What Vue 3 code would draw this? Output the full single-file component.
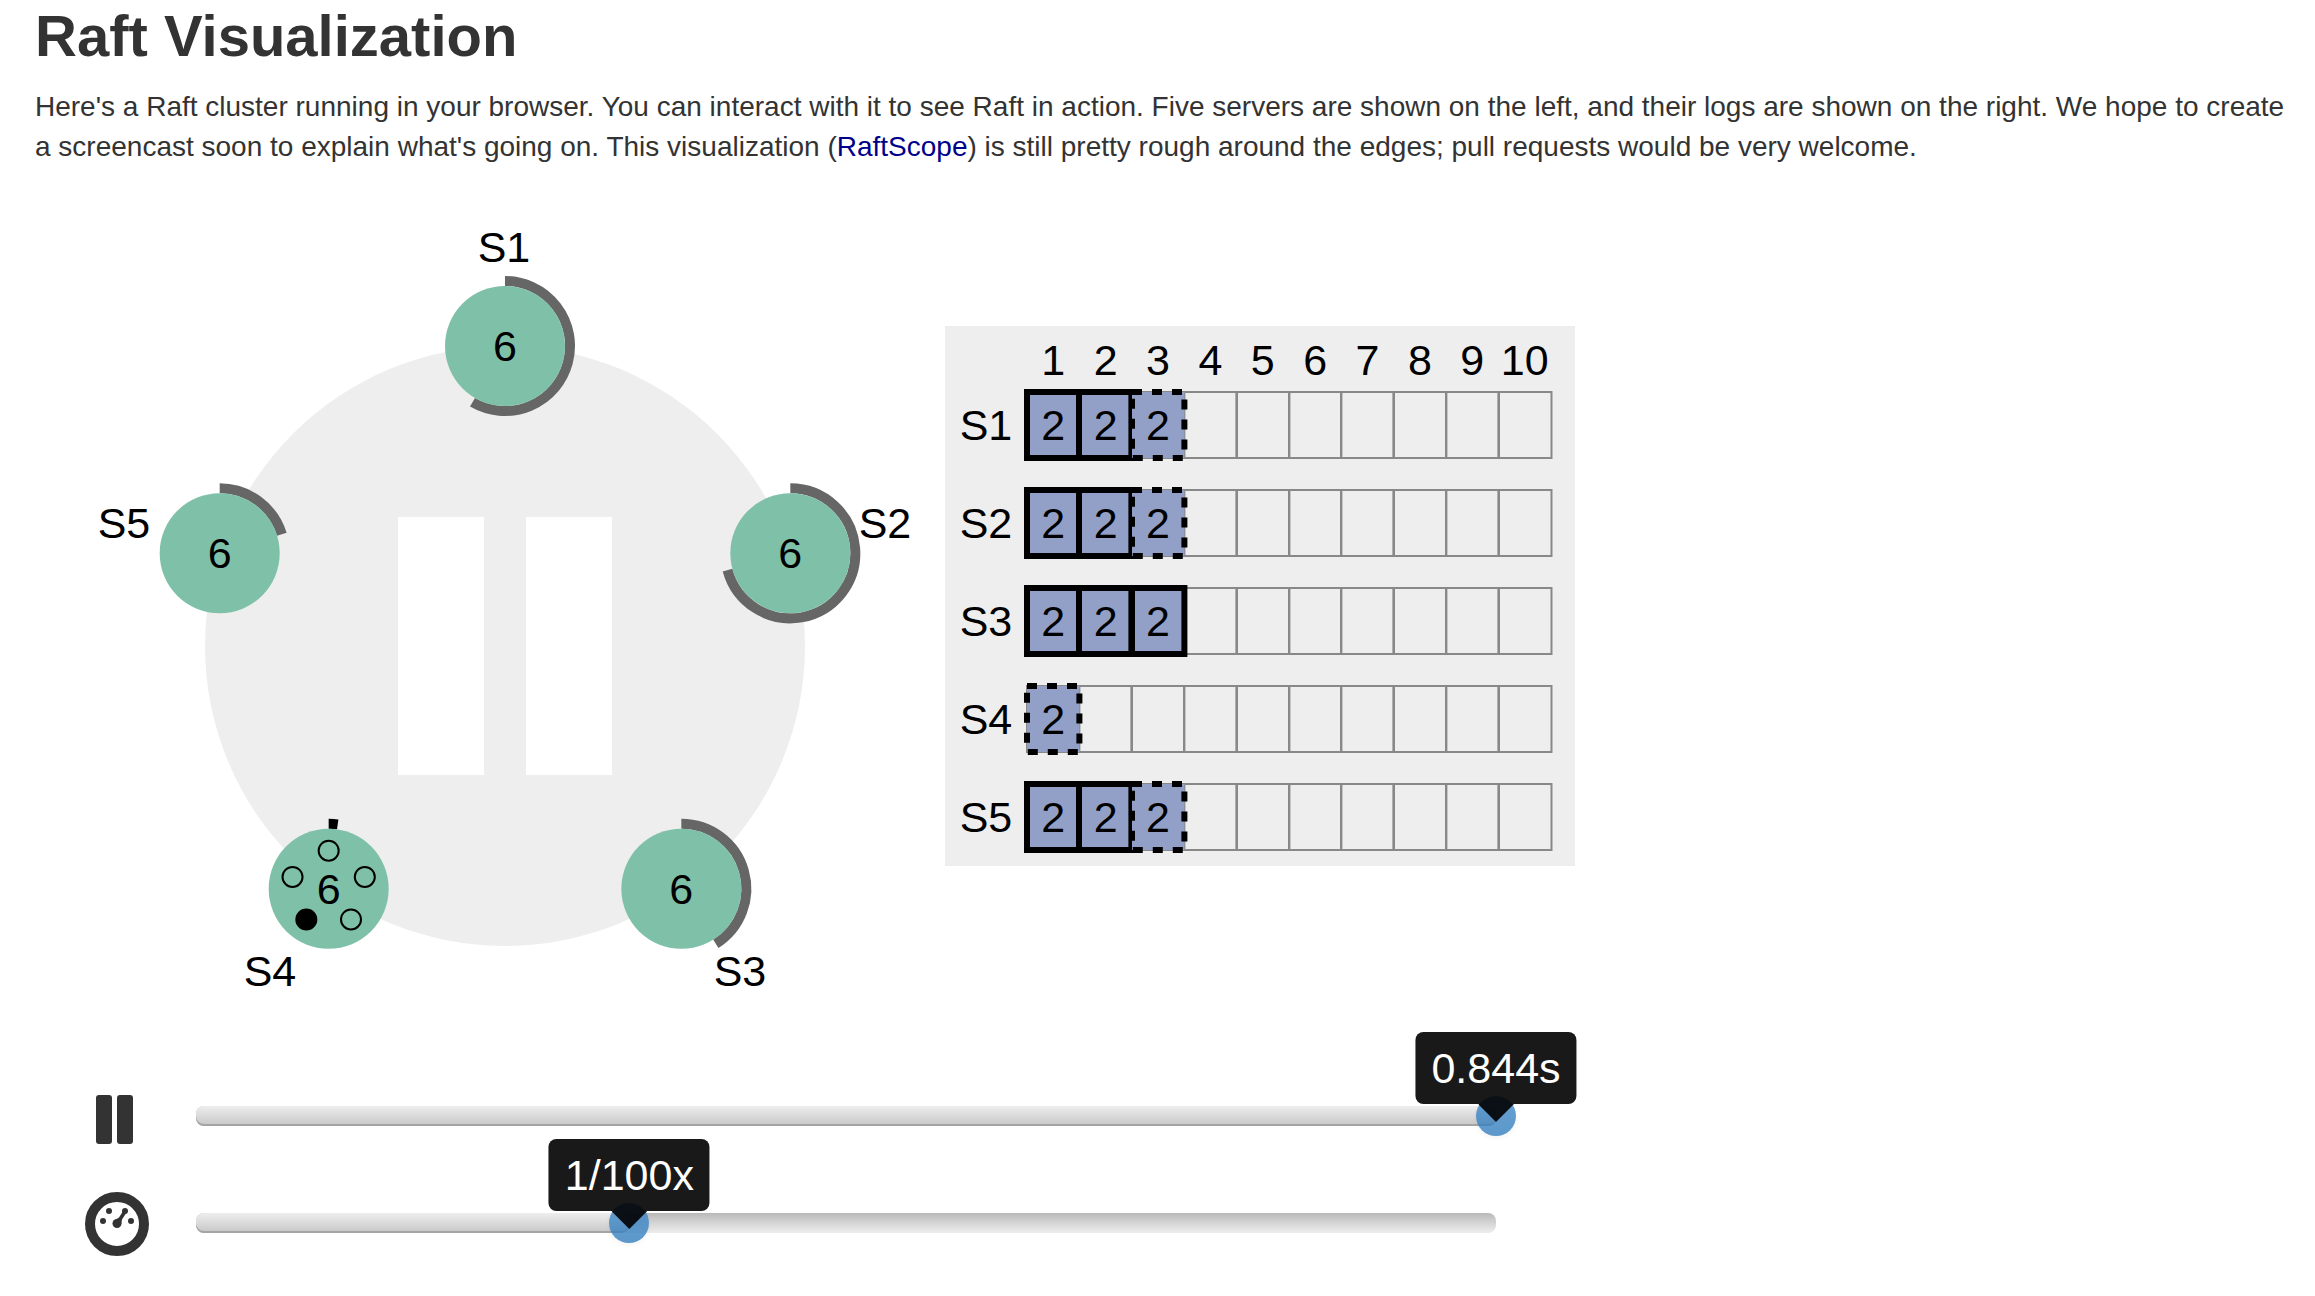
<script setup>
import { ref, computed } from 'vue'

const center = { x: 470, y: 440 }
const ringRadius = 300

function around(cx, cy, radius, degrees) {
  const a = (degrees * Math.PI) / 180
  return { x: cx + radius * Math.sin(a), y: cy - radius * Math.cos(a) }
}

function arcPath(s) {
  const from = around(s.x, s.y, 65, 0)
  const to = around(s.x, s.y, 65, s.timer)
  const large = s.timer > 180 ? 1 : 0
  return `M${from.x} ${from.y} A65 65 0 ${large} 1 ${to.x} ${to.y}`
}

const servers = [
  { name: 'S1', term: 6, timer: 210, label: { x: 469, y: 56 } },
  { name: 'S2', term: 6, timer: 255, label: { x: 850, y: 332 } },
  { name: 'S3', term: 6, timer: 148, label: { x: 705, y: 780 } },
  { name: 'S4', term: 6, timer: 8, candidate: true, label: { x: 235, y: 780 } },
  { name: 'S5', term: 6, timer: 73, label: { x: 89, y: 332 } },
].map((s, i) => ({ ...s, ...around(center.x, center.y, ringRadius, i * 72) }))

const candidate = servers.find((s) => s.candidate)
const votes = servers.map((s, i) => ({
  ...around(candidate.x, candidate.y, 38, i * 72),
  granted: s === candidate,
}))

const indexes = Array.from({ length: 10 }, (_, i) => i + 1)
const entry = (term, committed) => ({ term, committed })
const logs = [
  { name: 'S1', entries: [entry(2, true), entry(2, true), entry(2, false)] },
  { name: 'S2', entries: [entry(2, true), entry(2, true), entry(2, false)] },
  { name: 'S3', entries: [entry(2, true), entry(2, true), entry(2, true)] },
  { name: 'S4', entries: [entry(2, false)] },
  { name: 'S5', entries: [entry(2, true), entry(2, true), entry(2, false)] },
]

const time = ref(844)
const speed = ref(1000)
const timeLabel = computed(() => `${(time.value / 1000).toFixed(3)}s`)
const speedLabel = computed(() => `1/${Math.round(10 ** (speed.value / 500))}x`)
const timePercent = computed(() => `${(time.value / 844) * 100}%`)
const speedPercent = computed(() => `${(speed.value / 3000) * 100}%`)
</script>

<template>
  <main class="page">
    <h1>Raft Visualization</h1>
    <p class="intro">
      Here's a Raft cluster running in your browser. You can interact with it to see Raft in action.
      Five servers are shown on the left, and their logs are shown on the right. We hope to create a
      screencast soon to explain what's going on. This visualization (<a href="#raftscope">RaftScope</a>)
      is still pretty rough around the edges; pull requests would be very welcome.
    </p>

    <section class="stage">
      <svg class="cluster" viewBox="0 0 910 800" role="img" aria-label="Raft cluster, paused">
        <circle class="ring" :cx="center.x" :cy="center.y" :r="ringRadius" />
        <rect class="bar" x="363" y="311" width="86" height="258" />
        <rect class="bar" x="491" y="311" width="86" height="258" />
        <g v-for="s in servers" :key="s.name">
          <path class="timer" :class="{ active: s.candidate }" :d="arcPath(s)" />
          <circle class="server" :cx="s.x" :cy="s.y" r="60" />
          <text :x="s.x" :y="s.y + 15">{{ s.term }}</text>
          <text :x="s.label.x" :y="s.label.y">{{ s.name }}</text>
        </g>
        <circle
          v-for="(v, i) in votes"
          :key="i"
          class="vote"
          :class="{ granted: v.granted }"
          :cx="v.x"
          :cy="v.y"
          r="10"
        />
      </svg>

      <div class="logs">
        <table>
          <thead>
            <tr>
              <td class="corner"></td>
              <th v-for="i in indexes" :key="i" scope="col">{{ i }}</th>
            </tr>
          </thead>
          <tbody>
            <tr v-for="log in logs" :key="log.name">
              <th scope="row">{{ log.name }}</th>
              <td v-for="(i, n) in indexes" :key="i">
                <div class="slot">
                  <svg class="grid" aria-hidden="true"><rect width="100%" height="100%" /></svg>
                  <template v-if="log.entries[n]">
                    <svg
                      class="entry"
                      :class="{ pending: !log.entries[n].committed }"
                      aria-hidden="true"
                    >
                      <rect width="100%" height="100%" />
                    </svg>
                    <span class="term">{{ log.entries[n].term }}</span>
                  </template>
                </div>
              </td>
            </tr>
          </tbody>
        </table>
      </div>
    </section>

    <section class="controls">
      <div class="control">
        <button type="button" class="icon" aria-label="Pause">
          <svg viewBox="0 0 64 64">
            <rect x="11" y="11" width="16" height="49" rx="3" />
            <rect x="32" y="11" width="16" height="49" rx="3" />
          </svg>
        </button>
        <div class="slider">
          <div class="track"></div>
          <div class="fill" :style="{ width: timePercent }"></div>
          <input v-model.number="time" type="range" min="0" max="844" aria-label="Time" />
          <output class="tip" :style="{ left: timePercent }">{{ timeLabel }}</output>
        </div>
      </div>
      <div class="control">
        <button type="button" class="icon" aria-label="Speed">
          <svg viewBox="0 0 64 64">
            <circle class="dial" cx="32" cy="33" r="27" />
            <circle cx="18" cy="30" r="3" />
            <circle cx="24" cy="20" r="3" />
            <circle cx="40" cy="20" r="3" />
            <circle cx="46" cy="30" r="3" />
            <circle cx="32" cy="32.5" r="4.5" />
            <path d="M30 29 L34 26.5 L38.5 19.5 L41.5 21.5 L37 28.5 L36 34 Z" />
          </svg>
        </button>
        <div class="slider">
          <div class="track"></div>
          <div class="fill" :style="{ width: speedPercent }"></div>
          <input v-model.number="speed" type="range" min="0" max="3000" aria-label="Playback speed" />
          <output class="tip" :style="{ left: speedPercent }">{{ speedLabel }}</output>
        </div>
      </div>
    </section>
  </main>
</template>

<style>
body {
  background: #fff;
}
</style>

<style scoped>
.page {
  padding: 0 8px 0 35px;
  color: #333;
  font-family: "Liberation Sans", Arial, sans-serif;
  font-size: 28px;
  line-height: 40px;
}

h1 {
  margin: 0 0 15px;
  font-size: 58px;
  line-height: 72px;
  font-weight: 700;
}

.intro {
  margin: 0;
}

.intro a {
  color: #00008b;
  text-decoration: none;
}

.stage {
  display: grid;
  grid-template-columns: 13fr 9fr;
  align-items: start;
  max-width: 1540px;
  margin-top: 39px;
}

.cluster {
  display: block;
  width: 100%;
}

.ring {
  fill: #eee;
}

.bar {
  fill: #fff;
}

.server {
  fill: #7fc0a9;
}

.timer {
  fill: none;
  stroke: #666;
  stroke-width: 10;
}

.timer.active {
  stroke: #000;
}

.vote {
  fill: none;
  stroke: #000;
  stroke-width: 2;
}

.vote.granted {
  fill: #000;
}

.cluster text {
  fill: #000;
  font-size: 43px;
  text-anchor: middle;
}

.logs {
  margin-top: 120px;
  padding-right: 24px;
  background: #eee;
}

table {
  width: 100%;
  table-layout: fixed;
  border-collapse: collapse;
  color: #000;
  font-size: 43px;
  line-height: 44px;
}

th,
td {
  padding: 0;
  font-weight: 400;
  text-align: center;
}

.corner {
  width: 82px;
}

thead th {
  height: 56px;
  padding-bottom: 10px;
  vertical-align: bottom;
  white-space: nowrap;
}

tbody th,
tbody td {
  height: 66px;
  padding-bottom: 32px;
}

tbody tr:last-child th,
tbody tr:last-child td {
  padding-bottom: 16px;
}

.slot {
  position: relative;
  height: 66px;
}

.grid,
.entry {
  position: absolute;
  inset: 0;
  width: 100%;
  height: 100%;
  overflow: visible;
}

.grid rect {
  fill: none;
  stroke: #888;
  stroke-width: 2;
}

.entry {
  z-index: 1;
}

.entry rect {
  fill: #92a0c8;
  stroke: #000;
  stroke-width: 6;
}

.entry.pending rect {
  stroke-dasharray: 10 10;
}

.term {
  position: relative;
  z-index: 2;
  line-height: 66px;
}

.controls {
  display: grid;
  gap: 27px;
  max-width: 1461px;
  margin-top: 70px;
}

.control {
  display: flex;
  align-items: center;
  gap: 47px;
  height: 80px;
  padding-left: 50px;
}

.icon {
  flex: none;
  width: 64px;
  height: 64px;
  padding: 0;
  border: 0;
  background: none;
}

.icon svg {
  display: block;
  overflow: visible;
  fill: #333;
}

.icon .dial {
  fill: none;
  stroke: #333;
  stroke-width: 10;
}

.slider {
  position: relative;
  flex: 1;
  height: 20px;
}

.track,
.fill {
  position: absolute;
  inset: 0 auto 0 0;
  width: 100%;
  border-radius: 8px;
}

.track {
  background: linear-gradient(#b8b8b8, #cacaca 30%, #eee);
}

.fill {
  background: linear-gradient(#eee, #c6c6c6);
  box-shadow: inset 0 -2px 0 #a4a4a4;
}

.slider input {
  position: absolute;
  top: -10px;
  left: -20px;
  width: calc(100% + 40px);
  height: 40px;
  margin: 0;
  appearance: none;
  background: none;
}

.slider input::-webkit-slider-thumb {
  appearance: none;
  width: 40px;
  height: 40px;
  border: 0;
  border-radius: 50%;
  background: linear-gradient(#428bca, #357ebd);
  box-shadow: 0 2px 4px rgba(0, 0, 0, 0.05);
  opacity: 0.8;
}

.tip {
  position: absolute;
  bottom: 22px;
  padding: 0 16px;
  border-radius: 8px;
  background: rgba(0, 0, 0, 0.9);
  color: #fff;
  font-size: 43px;
  line-height: 72px;
  white-space: nowrap;
  transform: translateX(-50%);
}

.tip::after {
  content: "";
  position: absolute;
  top: 100%;
  left: 50%;
  width: 36px;
  height: 18px;
  margin-left: -18px;
  background: rgba(0, 0, 0, 0.9);
  clip-path: polygon(0 0, 100% 0, 50% 100%);
}
</style>
